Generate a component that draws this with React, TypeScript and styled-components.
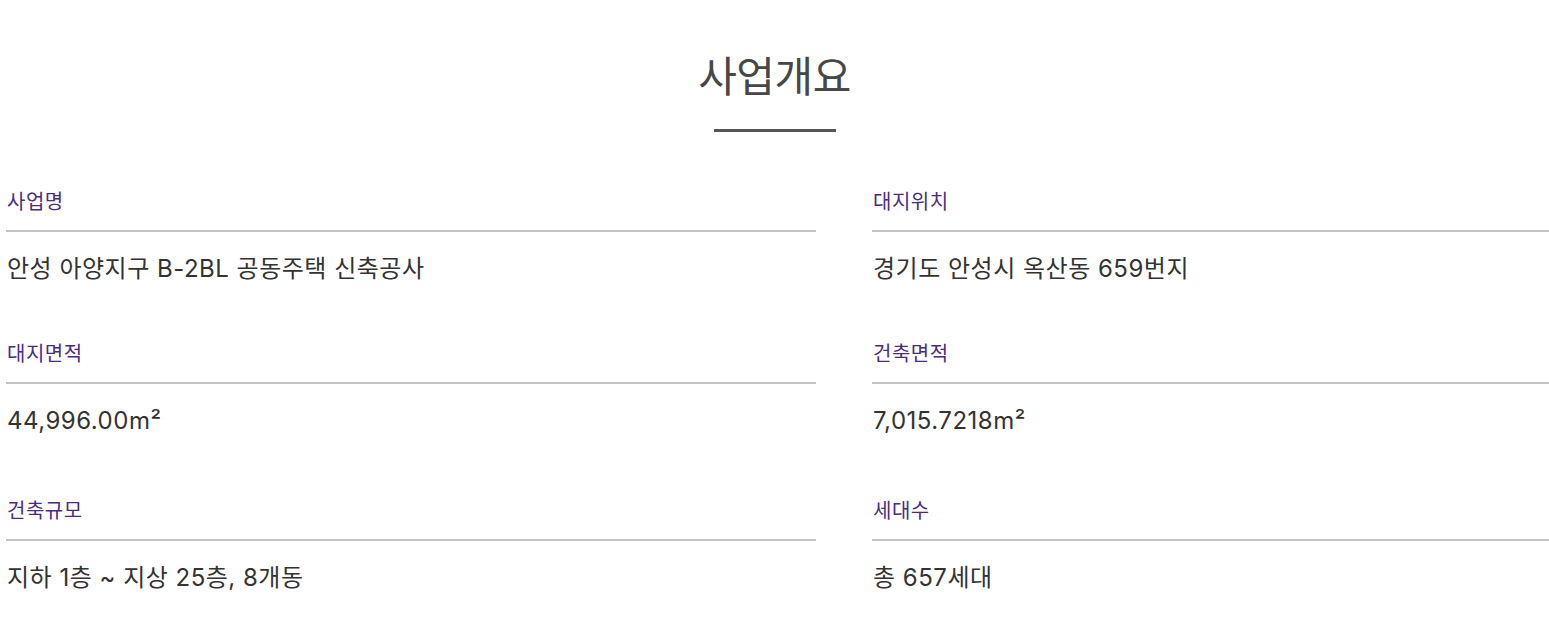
import React from "react";
import styled, { createGlobalStyle } from "styled-components";

const Global = createGlobalStyle`
  html, body { margin: 0; padding: 0; background: #fff; }
  body {
    font-family: Inter, "Noto Sans CJK KR", "Noto Sans", sans-serif;
    overflow: hidden;
  }
`;

const Page = styled.div`
  width: 1549px;
  padding-top: 46px;
`;

const Header = styled.div`
  display: flex;
  flex-direction: column;
  align-items: center;
`;

const Title = styled.h2`
  margin: 0;
  font-size: 42px;
  font-weight: 400;
  line-height: 62px;
  color: #474747;
  letter-spacing: -0.5px;
`;

const TitleBar = styled.div`
  width: 122px;
  height: 3px;
  background: #555;
  margin-top: 21px;
`;

const Grid = styled.div`
  display: grid;
  grid-template-columns: 810px 1fr;
  column-gap: 56px;
  row-gap: 57px;
  padding-left: 6px;
  margin-top: 57px;
`;

const Item = styled.div`
  display: flex;
  flex-direction: column;
  min-width: 0;
`;

const Label = styled.div`
  font-size: 20px;
  line-height: 26px;
  color: #4a2d80;
  padding-left: 1px;
  padding-bottom: 15px;
  border-bottom: 2px solid #c4c4c4;
  letter-spacing: 0.5px;
`;

const Value = styled.div<{ $unit?: boolean }>`
  font-size: 24px;
  line-height: 30px;
  color: #333;
  padding-top: 22px;
  padding-bottom: ${(p) => (p.$unit ? 5 : 0)}px;
  padding-left: 1px;
  letter-spacing: 0.5px;
`;

const items: { label: string; value: string; unit?: boolean }[] = [
  { label: "사업명", value: "안성 아양지구 B-2BL 공동주택 신축공사" },
  { label: "대지위치", value: "경기도 안성시 옥산동 659번지" },
  { label: "대지면적", value: "44,996.00m²", unit: true },
  { label: "건축면적", value: "7,015.7218m²", unit: true },
  { label: "건축규모", value: "지하 1층 ~ 지상 25층, 8개동" },
  { label: "세대수", value: "총 657세대" },
];

export default function App() {
  return (
    <Page>
      <Global />
      <Header>
        <Title>사업개요</Title>
        <TitleBar />
      </Header>
      <Grid>
        {items.map((it) => (
          <Item key={it.label}>
            <Label>{it.label}</Label>
            <Value $unit={it.unit}>{it.value}</Value>
          </Item>
        ))}
      </Grid>
    </Page>
  );
}
